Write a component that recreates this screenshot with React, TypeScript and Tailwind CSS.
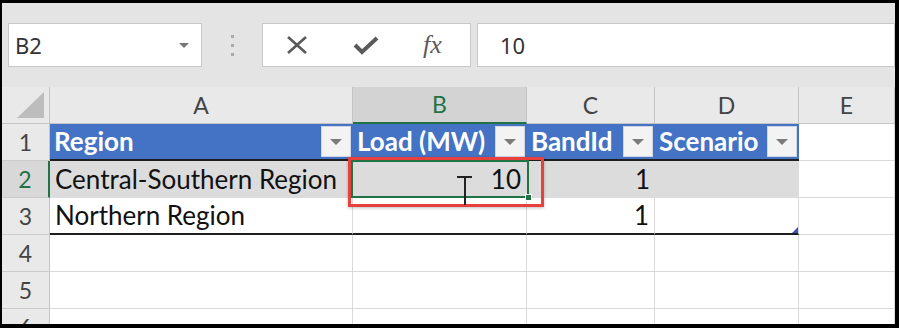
import React from "react";

const cols = ["A", "B", "C", "D", "E"];
const cellFont = { fontFamily: "Lato, 'Liberation Sans', sans-serif" };

const FilterButton = () => (
    <div className="w-[30px] h-[31px] bg-[#f3f3f3] border border-[#cfd6e4] flex items-center justify-center shrink-0">
        <div className="w-0 h-0 border-x-[6px] border-x-transparent border-t-[6px] border-t-[#7b7b7b]" />
    </div>
);

const HeaderCell = ({ label }: { label: string }) => (
    <div className="h-[37px] bg-[#4472c4] border-b-2 border-b-[#1e1e1e] flex items-center justify-between pl-[4px] pr-[2px]">
        <span className="text-white font-bold text-[26px] leading-none pb-[2px]">{label}</span>
        <FilterButton />
    </div>
);

const RowHead = ({ n, active }: { n: number; active?: boolean }) => (
    <div
        className={`h-[37px] flex items-center justify-center text-[23px] border-b border-b-[#cbcbcb] ${
            active ? "bg-[#d8d8d8] text-[#217346] border-r-2 border-r-[#217346]" : "bg-[#e9e9e9] text-[#444] border-r border-r-[#c4c4c4]"
        }`}
    >
        {n}
    </div>
);

const Blank = ({ bottom }: { bottom?: boolean }) => (
    <div className={`h-[37px] bg-white border-r border-r-[#d9d9d9] ${bottom ? "border-b-2 border-b-[#1e1e1e]" : "border-b border-b-[#d9d9d9]"}`} />
);

export default function App() {
    return (
        <div className="w-[899px] h-[328px] bg-black pt-[3px] pl-[2px] pr-[4px] pb-[4px]" style={cellFont}>
            <div className="w-full h-full bg-[#e4e4e4] flex flex-col overflow-hidden">
                {/* formula bar */}
                <div className="h-[84px] shrink-0 flex items-start pt-[20px] pl-[6px]">
                    <div
                        className="w-[194px] h-[44px] bg-white border border-[#c8c8c8] flex items-center justify-between pl-[6px] pr-[12px]"
                        style={{ fontFamily: "'Noto Sans', sans-serif" }}
                    >
                        <span className="text-[22px] text-[#333]">B2</span>
                        <div className="w-0 h-0 border-x-[5px] border-x-transparent border-t-[5px] border-t-[#777]" />
                    </div>
                    <div className="w-[60px] h-[44px] flex flex-col items-center justify-center gap-[6px]">
                        <div className="w-[3px] h-[3px] bg-[#a8a8a8]" />
                        <div className="w-[3px] h-[3px] bg-[#a8a8a8]" />
                        <div className="w-[3px] h-[3px] bg-[#a8a8a8]" />
                    </div>
                    <div className="w-[209px] h-[44px] bg-white border border-[#c8c8c8] flex items-center">
                        <svg width="24" height="20" viewBox="0 0 24 20" className="ml-[22px]">
                            <path d="M3 2 L21 18 M21 2 L3 18" stroke="#5a5a5a" strokeWidth="2.6" fill="none" />
                        </svg>
                        <svg width="26" height="20" viewBox="0 0 26 20" className="ml-[44px]">
                            <path d="M2 10 L9 17 L24 3" stroke="#5a5a5a" strokeWidth="4" fill="none" />
                        </svg>
                        <span
                            className="ml-[44px] text-[26px] italic text-[#5a5a5a] leading-none"
                            style={{ fontFamily: "'Liberation Serif', serif" }}
                        >
                            fx
                        </span>
                    </div>
                    <div
                        className="flex-1 ml-[6px] h-[44px] bg-white border border-[#c8c8c8] flex items-center pl-[22px]"
                        style={{ fontFamily: "'Noto Sans', sans-serif" }}
                    >
                        <span className="text-[22px] text-[#333]">10</span>
                    </div>
                </div>

                {/* sheet */}
                <div className="relative flex-1 bg-white">
                    <div className="grid grid-cols-[48px_303px_174px_128px_144px_1fr]">
                        {/* column headers */}
                        <div className="h-[37px] bg-[#e9e9e9] border-r border-r-[#c4c4c4] border-b border-b-[#c4c4c4] flex items-end justify-end pr-[5px] pb-[5px]">
                            <div className="w-0 h-0 border-l-[27px] border-l-transparent border-b-[26px] border-b-[#bdbdbd]" />
                        </div>
                        {cols.map((c) => (
                            <div
                                key={c}
                                className={`h-[37px] flex items-center justify-center text-[23px] ${
                                    c === "B"
                                        ? "bg-[#d3d3d3] text-[#217346] border-b-2 border-b-[#217346] border-r border-r-[#c4c4c4]"
                                        : "bg-[#e9e9e9] text-[#444] border-b border-b-[#c4c4c4] border-r border-r-[#c4c4c4]"
                                }`}
                            >
                                {c}
                            </div>
                        ))}

                        {/* row 1 */}
                        <RowHead n={1} />
                        <HeaderCell label="Region" />
                        <HeaderCell label="Load (MW)" />
                        <HeaderCell label="BandId" />
                        <HeaderCell label="Scenario" />
                        <Blank />

                        {/* row 2 */}
                        <RowHead n={2} active />
                        <div className="h-[37px] bg-[#dcdcdc] flex items-center pl-[5px] text-[26px] text-[#111]">Central-Southern Region</div>
                        <div className="h-[37px] bg-[#dcdcdc] flex items-center justify-end pr-[6px] text-[26px] text-[#111]">10</div>
                        <div className="h-[37px] bg-[#dcdcdc] flex items-center justify-end pr-[5px] text-[26px] text-[#111]">1</div>
                        <div className="h-[37px] bg-[#dcdcdc]" />
                        <Blank />

                        {/* row 3 */}
                        <RowHead n={3} />
                        <div className="h-[37px] border-r border-r-[#d9d9d9] border-b-2 border-b-[#1e1e1e] flex items-center pl-[5px] text-[26px] text-[#111]">Northern Region</div>
                        <div className="h-[37px] border-r border-r-[#d9d9d9] border-b-2 border-b-[#1e1e1e]" />
                        <div className="h-[37px] border-r border-r-[#d9d9d9] border-b-2 border-b-[#1e1e1e] flex items-center justify-end pr-[5px] text-[26px] text-[#111]">1</div>
                        <div className="relative h-[37px] border-r border-r-[#d9d9d9] border-b-2 border-b-[#1e1e1e]">
                            <div className="absolute right-[0px] bottom-[0px] w-0 h-0 border-l-[6px] border-l-transparent border-b-[6px] border-b-[#3f51b5]" />
                        </div>
                        <Blank />

                        {[4, 5, 6].map((n) => (
                            <React.Fragment key={n}>
                                <RowHead n={n} />
                                <Blank />
                                <Blank />
                                <Blank />
                                <Blank />
                                <Blank />
                            </React.Fragment>
                        ))}
                    </div>

                    {/* active cell B2 */}
                    <div className="absolute left-[349px] top-[73px] w-[178px] h-[38px] border-2 border-[#217346]">
                        <div className="absolute right-[-5px] bottom-[-5px] w-[7px] h-[7px] bg-[#217346] border border-white" />
                    </div>

                    {/* red highlight */}
                    <div className="absolute left-[346px] top-[70px] w-[196px] h-[50px] border-[3px] border-[#e8403c] shadow-[0_1px_3px_rgba(0,0,0,0.25)]" />

                    {/* I-beam cursor */}
                    <div className="absolute left-[454px] top-[89px] w-[17px] h-[29px] flex flex-col items-center">
                        <div className="w-[15px] h-[2px] bg-[#222]" />
                        <div className="w-[2px] flex-1 bg-[#222]" />
                    </div>
                </div>
            </div>
        </div>
    );
}
